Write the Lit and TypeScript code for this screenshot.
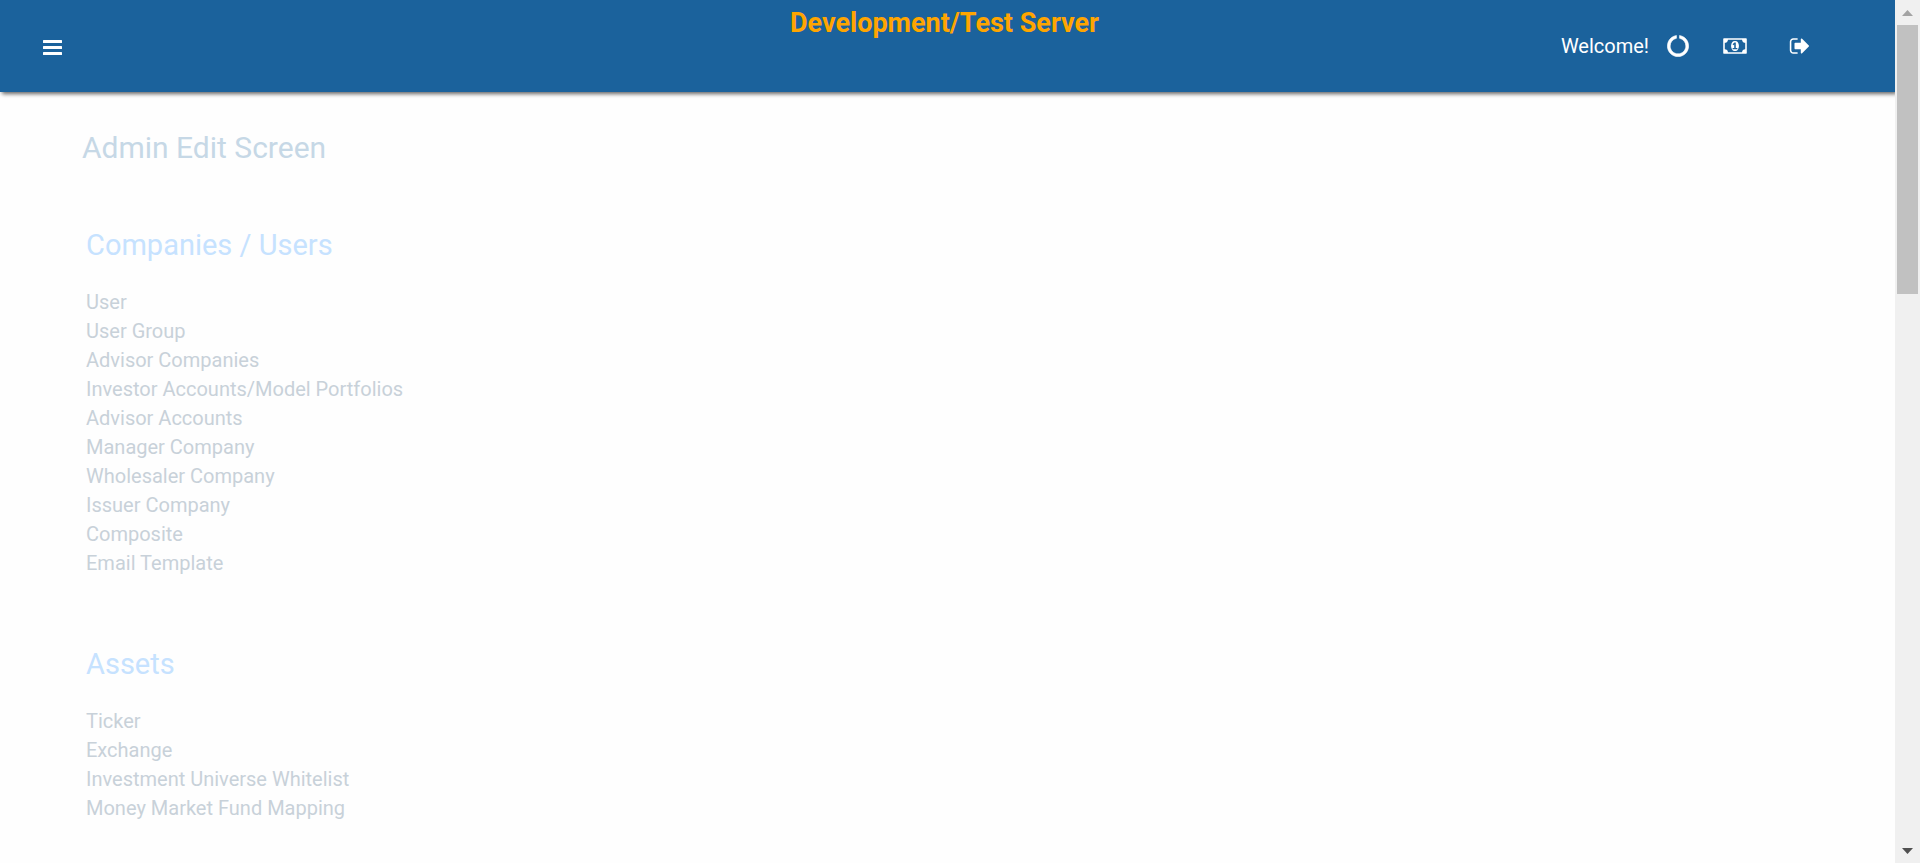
import { LitElement, html, css } from "lit";
import { customElement } from "lit/decorators.js";

const sections = [
  {
    title: "Companies / Users",
    items: [
      "User",
      "User Group",
      "Advisor Companies",
      "Investor Accounts/Model Portfolios",
      "Advisor Accounts",
      "Manager Company",
      "Wholesaler Company",
      "Issuer Company",
      "Composite",
      "Email Template",
    ],
  },
  {
    title: "Assets",
    items: ["Ticker", "Exchange", "Investment Universe Whitelist", "Money Market Fund Mapping"],
  },
];

@customElement("app-header")
class AppHeader extends LitElement {
  static styles = css`
    :host {
      display: block;
    }
    .bar {
      display: grid;
      grid-template-columns: 1fr auto 1fr;
      align-items: center;
      min-height: 92px;
      padding-right: 6px;
      background: #1b629c;
      box-shadow: 2px 2px 4px rgba(0, 0, 0, 0.6);
      color: #fff;
    }
    button,
    a {
      display: flex;
      padding: 0;
      border: 0;
      background: none;
      color: inherit;
      cursor: pointer;
    }
    svg {
      display: block;
      height: 22px;
      fill: currentColor;
    }
    .menu {
      justify-self: start;
      margin-left: 43px;
      padding-top: 3px;
    }
    .banner {
      align-self: start;
      margin: 0;
      font-size: 27px;
      line-height: 46px;
      font-weight: 700;
      color: #ffa500;
    }
    .tools {
      justify-self: end;
      display: flex;
      align-items: center;
      margin-right: 78px;
    }
    .welcome {
      font-size: 20px;
      line-height: 28px;
      margin-right: 18px;
    }
    .ring {
      stroke: currentColor;
      stroke-width: 50;
    }
    .money {
      margin: 0 42px 0 34px;
    }
  `;
  render() {
    return html`
      <header class="bar">
        <button class="menu" aria-label="Menu">
          <svg width="19" viewBox="0 0 19 22">
            <rect y="3" width="19" height="3" rx="0.5" />
            <rect y="9" width="19" height="3" rx="0.5" />
            <rect y="15" width="19" height="3" rx="0.5" />
          </svg>
        </button>
        <p class="banner">Development/Test Server</p>
        <div class="tools">
          <span class="welcome">Welcome!</span>
          <button aria-label="Refresh">
            <svg class="ring" width="22" viewBox="0 0 1792 1792">
              <path
                d="M1760 896q0 176-68.5 336t-184 275.5-275.5 184-336 68.5-336-68.5-275.5-184-184-275.5-68.5-336q0-213 97-398.5t265-305.5 374-151v228q-221 45-366.5 221t-145.5 406q0 130 51 248.5t136.5 204 204 136.5 248.5 51 248.5-51 204-136.5 136.5-204 51-248.5q0-230-145.5-406t-366.5-221v-228q206 31 374 151t265 305.5 97 398.5z"
              />
            </svg>
          </button>
          <button class="money" aria-label="Billing">
            <svg width="24" viewBox="0 0 1920 1792">
              <path
                d="M768 1152h384v-96h-128v-448h-114l-148 137 77 80q42-37 55-57h2v288h-128v96zm512-256q0 70-21 142t-59.5 134-101.5 101-138 39-138-39-101.5-101-59.5-134-21-142 21-142 59.5-134 101.5-101 138-39 138 39 101.5 101 59.5 134 21 142zm512 256v-512q-106 0-181-75t-75-181h-1152q0 106-75 181t-181 75v512q106 0 181 75t75 181h1152q0-106 75-181t181-75zm128-832v1152q0 26-19 45t-45 19h-1792q-26 0-45-19t-19-45v-1152q0-26 19-45t45-19h1792q26 0 45 19t19 45z"
              />
            </svg>
          </button>
          <a href="#logout" aria-label="Sign out">
            <svg width="22" viewBox="0 0 1792 1792">
              <path
                d="M704 1440q0 4 1 20t.5 26.5-3 23.5-10 19.5-20.5 6.5h-320q-119 0-203.5-84.5t-84.5-203.5v-704q0-119 84.5-203.5t203.5-84.5h320q13 0 22.5 9.5t9.5 22.5q0 4 1 20t.5 26.5-3 23.5-10 19.5-20.5 6.5h-320q-66 0-113 47t-47 113v704q0 66 47 113t113 47h312l11.5 1 11.5 3 8 5.5 7 9 2 13.5zm928-544q0 26-19 45l-544 544q-19 19-45 19t-45-19-19-45v-288h-448q-26 0-45-19t-19-45v-384q0-26 19-45t45-19h448v-288q0-26 19-45t45-19 45 19l544 544q19 19 19 45z"
              />
            </svg>
          </a>
        </div>
      </header>
    `;
  }
}

@customElement("scroll-rail")
class ScrollRail extends LitElement {
  static styles = css`
    :host {
      display: flex;
      flex-direction: column;
      background: #f0f0f0;
    }
    .arrow {
      display: grid;
      place-items: center;
      height: 25px;
      padding: 0;
      border: 0;
      background: none;
      color: #505050;
    }
    .up {
      color: #a3a3a3;
    }
    .arrow svg {
      display: block;
      fill: currentColor;
    }
    .track {
      flex: 1;
      padding: 0 2px;
    }
    .thumb {
      height: 33.1%;
      background: #c1c1c1;
    }
  `;
  render() {
    return html`
      <button class="arrow up" aria-label="Scroll up">
        <svg width="11" height="6" viewBox="0 0 11 6"><path d="M0 6 5.500 0 11 6z" /></svg>
      </button>
      <div class="track"><div class="thumb"></div></div>
      <button class="arrow" aria-label="Scroll down">
        <svg width="11" height="6" viewBox="0 0 11 6"><path d="M0 0h11L5.500 6z" /></svg>
      </button>
    `;
  }
}

@customElement("app-root")
class AppRoot extends LitElement {
  static styles = css`
    :host {
      display: grid;
      grid-template-columns: 1fr 25px;
      height: 100vh;
      overflow: hidden;
      background: #fefefe;
      font-family: Roboto, "Liberation Sans", sans-serif;
    }
    .page {
      min-width: 0;
      overflow: hidden;
    }
    main {
      padding: 36px 82px;
    }
    h1,
    h2 {
      margin: 0;
      line-height: 40px;
      font-weight: 400;
    }
    h1 {
      font-size: 30px;
      color: #c6d8e6;
    }
    h2 {
      font-size: 29px;
      color: #c6e2ff;
    }
    section {
      margin-top: 57px;
      padding-left: 4px;
    }
    section + section {
      margin-top: 66px;
    }
    ul {
      margin: 23px 0 0;
      padding: 0;
      list-style: none;
      font-size: 20px;
      line-height: 29px;
    }
    a {
      color: #c8d1d9;
      text-decoration: none;
    }
  `;
  render() {
    return html`
      <div class="page">
        <app-header></app-header>
        <main>
          <h1>Admin Edit Screen</h1>
          ${sections.map(
            (s) => html`
              <section>
                <h2>${s.title}</h2>
                <ul>
                  ${s.items.map((i) => html`<li><a href="#">${i}</a></li>`)}
                </ul>
              </section>
            `
          )}
        </main>
      </div>
      <scroll-rail></scroll-rail>
    `;
  }
}
